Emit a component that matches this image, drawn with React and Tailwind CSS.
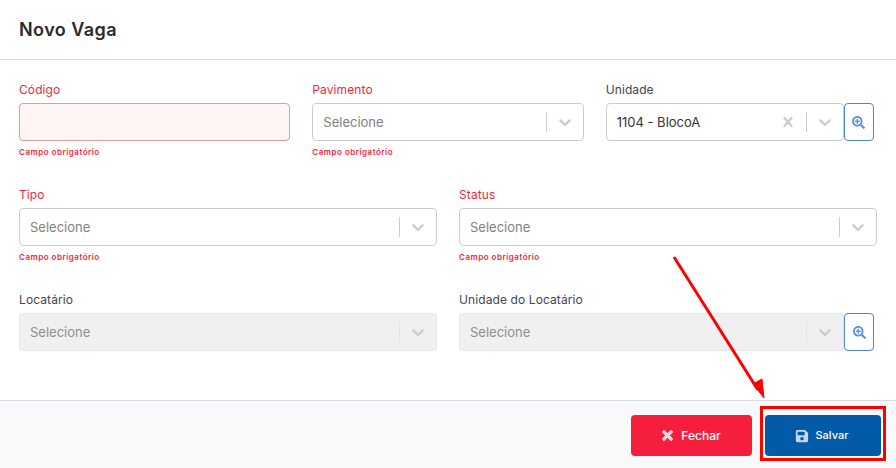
import { FaTimes, FaSave, FaSearchPlus } from "react-icons/fa";

const font = "font-['Inter','Noto_Sans',sans-serif]";

function Chevron() {
  return (
    <svg width="20" height="20" viewBox="0 0 20 20" className="text-[#cccccc]" fill="currentColor">
      <path d="M4.516 7.548c.436-.446 1.043-.481 1.576 0L10 11.295l3.908-3.747c.533-.481 1.141-.446 1.574 0 .436.445.408 1.197 0 1.615-.406.418-4.695 4.502-4.695 4.502a1.095 1.095 0 0 1-1.576 0S4.924 9.581 4.516 9.163s-.436-1.17 0-1.615z" />
    </svg>
  );
}

function Clear() {
  return (
    <svg width="20" height="20" viewBox="0 0 20 20" className="text-[#cccccc]" fill="currentColor">
      <path d="M14.348 14.849a1.2 1.2 0 0 1-1.697 0L10 11.819l-2.651 3.029a1.2 1.2 0 1 1-1.697-1.697l2.758-3.15-2.759-3.152a1.2 1.2 0 1 1 1.697-1.697L10 8.183l2.651-3.031a1.2 1.2 0 1 1 1.697 1.697l-2.758 3.152 2.758 3.15a1.2 1.2 0 0 1 0 1.698z" />
    </svg>
  );
}

function Field({ label, error, children, className = "" }) {
  return (
    <div className={className}>
      <div className={`text-[12px] leading-[14px] h-[14px] mb-[6px] tracking-[0.1px] ${error ? "text-[#f51f3d]" : "text-[#3f4450]"}`}>{label}</div>
      {children}
      {error && <div className="mt-[6px] text-[8px] leading-[10px] font-semibold tracking-[0.5px] text-[#f51f3d]">Campo obrigatório</div>}
    </div>
  );
}

function Select({ value, disabled, clear }) {
  return (
    <div className={`flex-1 min-w-0 h-[38px] rounded-[4px] border flex items-center ${disabled ? "bg-[#f0f0f0] border-[#e6e6e6]" : "bg-white border-[#cccccc]"}`}>
      <div className={`flex-1 pl-[10px] pt-[2px] text-[13px] ${value ? "text-[#333333]" : disabled ? "text-[#8f8f8f]" : "text-[#808080]"}`}>
        {value || "Selecione"}
      </div>
      {clear && <div className="px-[8px] flex"><Clear /></div>}
      <div className={`w-px h-[20px] ${disabled ? "bg-[#e3e3e3]" : "bg-[#cccccc]"}`} />
      <div className="px-[8px] flex"><Chevron /></div>
    </div>
  );
}

function SearchBtn() {
  return (
    <div className="w-[30px] h-[38px] shrink-0 rounded-[4px] border border-[#4a86d0] bg-white flex items-center justify-center text-[#5b93d6]">
      <FaSearchPlus size={13} />
    </div>
  );
}

export default function App() {
  return (
    <div className={`${font} relative w-[896px] h-[468px] bg-white overflow-hidden flex flex-col`}>
      <div className="h-[60px] shrink-0 border-b border-[#dcdcdc] px-[19px] flex items-center">
        <h1 className="text-[18px] font-semibold tracking-[0.45px] text-[#2b2b2b]">Novo Vaga</h1>
      </div>

      <div className="flex-1 px-[19px] pt-[23px]">
        <div className="grid grid-cols-3 gap-x-[22px] w-[858px] h-[105px]">
          <Field label="Código" error>
            <div className="h-[38px] rounded-[4px] border border-[#e59a9f] bg-[#fff5f4]" />
          </Field>
          <Field label="Pavimento" error>
            <Select />
          </Field>
          <Field label="Unidade">
            <div className="flex w-[268px]">
              <Select value="1104 - BlocoA" clear />
              <SearchBtn />
            </div>
          </Field>
        </div>
        <div className="grid grid-cols-2 gap-x-[22px] w-[858px] h-[105px]">
          <Field label="Tipo" error>
            <Select />
          </Field>
          <Field label="Status" error>
            <Select />
          </Field>
        </div>
        <div className="grid grid-cols-2 gap-x-[22px] w-[858px]">
          <Field label="Locatário">
            <Select disabled />
          </Field>
          <Field label="Unidade do Locatário">
            <div className="flex w-[415px]">
              <Select disabled />
              <SearchBtn />
            </div>
          </Field>
        </div>
      </div>

      <div className="h-[68px] shrink-0 border-t border-[#d9dbe0] bg-[#f8f9fb] flex justify-end items-start pt-[14px] pr-[15px] gap-[13px]">
        <button className="w-[121px] h-[41px] rounded-[4px] bg-[#f51f3d] text-white text-[12px] font-medium flex items-center justify-center gap-[6px] pr-[2px]">
          <FaTimes size={15} className="text-[#fbd0d6] stroke-[30px]" />
          Fechar
        </button>
        <button className="w-[116px] h-[41px] rounded-[4px] bg-[#035aa6] text-white text-[11px] font-medium flex items-center justify-center gap-[7px] pr-[3px]">
          <FaSave size={14} className="text-[#c5d8ea]" />
          Salvar
        </button>
      </div>

      {/* annotation over the screenshot */}
      <div className="absolute left-[760px] top-[406px] w-[126px] h-[55px] border-[3px] border-[#ff0000]" />
      <svg className="absolute left-0 top-0 pointer-events-none" width="896" height="468">
        <line x1="674" y1="257" x2="758" y2="390" stroke="#ff0000" strokeWidth="3" />
        <polygon points="764,398 753,384 762,379" fill="#ff0000" stroke="#ff0000" strokeWidth="1" />
      </svg>
    </div>
  );
}
